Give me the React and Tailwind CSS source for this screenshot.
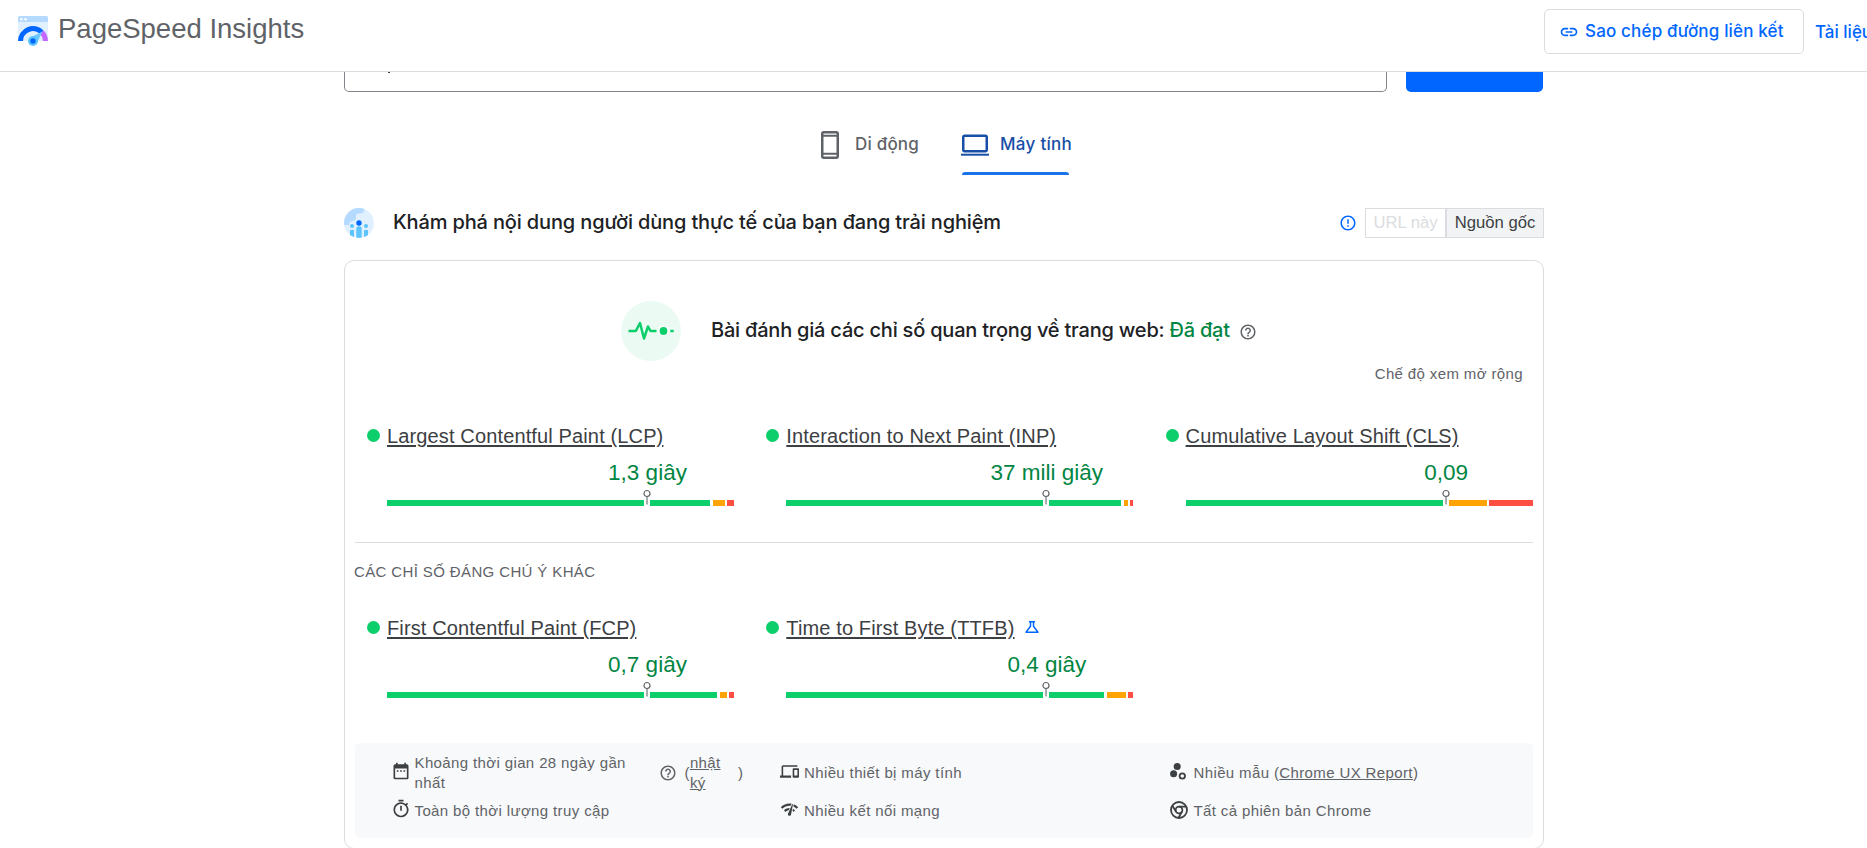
import React from "react";
import {
  MdDateRange,
  MdDevices,
  MdErrorOutline,
  MdHelpOutline,
  MdLink,
  MdNetworkCheck,
  MdOutlineScience,
  MdOutlineTimer,
} from "react-icons/md";

const coreMetrics = [
  { name: "Largest Contentful Paint (LCP)", value: "1,3 giây", good: 323, medium: 12 },
  { name: "Interaction to Next Paint (INP)", value: "37 mili giây", good: 335, medium: 4 },
  { name: "Cumulative Layout Shift (CLS)", value: "0,09", good: 260, medium: 38 },
];

const otherMetrics = [
  { name: "First Contentful Paint (FCP)", value: "0,7 giây", good: 330, medium: 7 },
  { name: "Time to First Byte (TTFB)", value: "0,4 giây", good: 318, medium: 19, experimental: true },
];

// Icons
const Logo = () => (
  <svg className="w-[30px] h-[30px] shrink-0" viewBox="0 0 30 30">
    <path d="M2 0h26a2 2 0 0 1 2 2v23H0V2a2 2 0 0 1 2-2z" fill="#e1f0ff" />
    <path d="M2 0h26a2 2 0 0 1 2 2v4H0V2a2 2 0 0 1 2-2z" fill="#b5daff" />
    <circle cx="3.3" cy="3.2" r="1.3" fill="#fff" />
    <circle cx="7.6" cy="3.2" r="1.3" fill="#fff" />
    <path d="M0 25a15 15 0 0 1 25.6-10.6L22 18a10 10 0 0 0-17 7z" fill="#0066ff" />
    <path d="M25.6 14.4A15 15 0 0 1 30 25h-5a10 10 0 0 0-3-7z" fill="#c469ff" />
    <path d="M24.5 15.5L11 22l7.500 6z" fill="#6fc8ff" />
    <circle cx="15" cy="25" r="5" fill="#5cc5ff" />
    <circle cx="15" cy="25" r="2.700" fill="#0066ff" />
  </svg>
);

const PhoneIcon = () => (
  <svg className="w-[18px] h-[28px]" viewBox="0 0 18 28" fill="none" stroke="currentColor">
    <rect x="1.250" y="1.250" width="15.500" height="25.500" rx="1.500" strokeWidth="2.500" />
    <path d="M1 4.800h16M1 22.800h16" strokeWidth="2" />
  </svg>
);

const LaptopIcon = () => (
  <svg className="w-[28px] h-[22px]" viewBox="0 0 28 22" fill="none" stroke="currentColor">
    <rect x="2.250" y="1.750" width="23.500" height="15.500" rx="1.500" strokeWidth="2.500" />
    <path d="M0 20.700h28" strokeWidth="2" />
  </svg>
);

const UsersIcon = () => (
  <svg className="w-[30px] h-[30px] shrink-0" viewBox="0 0 30 30">
    <clipPath id="users-clip">
      <circle cx="15" cy="15" r="15" />
    </clipPath>
    <g clipPath="url(#users-clip)">
      <rect width="30" height="30" fill="#e1f0ff" />
      <path d="M0 0h19.500c1.500 2.500 0 5.500-3 5.500h-2c-2 0-2.500 1-2.500 3v2c0 2-2 2-4 2.500s-3 1.500-3 4H0z" fill="#b5daff" />
      <g fill="#5cc5ff">
        <path d="M6 22h4v8H6zM12.300 21a2.700 2.700 0 0 1 5.400 0v9h-5.400zM20 22h4v8h-4z" />
        <circle cx="8" cy="18" r="2" />
        <circle cx="22" cy="18" r="2" />
      </g>
      <circle cx="15" cy="15" r="2.700" fill="#0066ff" />
    </g>
  </svg>
);

const PulseIcon = () => (
  <svg className="w-[60px] h-[60px] shrink-0" viewBox="0 0 60 60">
    <circle cx="30" cy="30" r="30" fill="#ebfbf3" />
    <path
      d="M7.500 30h7.300l4.200-8 4 15.500 4-12 2.500 4.500h6"
      fill="none"
      stroke="#0cce6a"
      strokeWidth="2.500"
      strokeLinejoin="round"
    />
    <circle cx="42.500" cy="30" r="5.500" fill="#fff" />
    <circle cx="42.500" cy="30" r="3.900" fill="#0cce6a" />
    <path d="M49.300 30h3.400" stroke="#0cce6a" strokeWidth="2.500" />
  </svg>
);

const SamplesIcon = () => (
  <svg className="w-[17px] h-[17px] -mt-[3px]" viewBox="0 0 17 17" fill="currentColor">
    <circle cx="7.200" cy="3.600" r="3.500" />
    <circle cx="3.600" cy="10.800" r="3.500" />
    <circle cx="12.300" cy="13" r="2.700" fill="none" stroke="currentColor" strokeWidth="1.800" />
  </svg>
);

const ChromeIcon = () => (
  <svg className="w-[18px] h-[18px] -mt-[3px]" viewBox="0 0 18 18" fill="none" stroke="currentColor" strokeWidth="1.800">
    <circle cx="9" cy="9" r="8" />
    <circle cx="9" cy="9" r="3.400" />
    <path d="M9 5.600h7.400M6.100 10.700L2.200 4.400M11.900 10.700L8.400 17" />
  </svg>
);

// Distribution bar with the 75th percentile pin
const Metric = ({ name, value, good, medium, experimental }) => (
  <div className="w-[347px]">
    <div className="flex items-center h-[26px] -ml-5">
      <span className="w-[13px] h-[13px] mr-[7px] -mt-[2px] rounded-full bg-[#0cce6b]" />
      <a className="text-[20px] leading-[26px] tracking-[0.135px] text-[#3c4043] underline decoration-2 underline-offset-2">
        {name}
      </a>
      {experimental && <MdOutlineScience className="ml-2 -mt-[2px] w-[18px] h-[18px] text-[#0066ff]" />}
    </div>
    <div className="w-[521px] h-[28px] mt-[10px] text-center text-[22.5px] leading-[28px] text-[#018642]">{value}</div>
    <div className="relative flex h-[6px] mt-[13px]">
      <div className="bg-[#0cce6b]" style={{ width: good }} />
      <div className="ml-[3px] bg-[#ffa400]" style={{ width: medium }} />
      <div className="ml-[2px] flex-1 bg-[#ff4e42]" />
      <span className="absolute left-[257px] top-0 w-[6px] h-[6px] bg-white" />
      <svg className="absolute left-[256px] -top-[11px] w-[8px] h-[16px]" viewBox="0 0 8 16" fill="none">
        <path d="M4 7.500V15.500" stroke="#8b8f93" strokeWidth="1.500" />
        <circle cx="4" cy="4.500" r="3" fill="#fff" stroke="#5f6368" strokeWidth="1.200" />
      </svg>
    </div>
  </div>
);

const Detail = ({ icon, children }) => (
  <div className="flex items-center shrink-0 w-[389.5px]">
    <span className="flex w-[24px] text-[#3c4043]">{icon}</span>
    {children}
  </div>
);

const App = () => {
  return (
    <div className="w-full h-[848px] overflow-hidden bg-white font-['Liberation_Sans',Arial,sans-serif] text-[#5f6368]">
      {/* Header */}
      <header className="flex justify-between h-[72px] border-b border-[#dadce0] overflow-hidden">
        <div className="flex pl-[18px] pt-[16px]">
          <Logo />
          <h1 className="ml-[10px] -mt-[3px] text-[27.5px] leading-[32px]">PageSpeed Insights</h1>
        </div>
        <div className="flex w-[323px] pt-[9px] font-['Inter',sans-serif] font-medium text-[#0066ff] whitespace-nowrap">
          <button className="flex items-center shrink-0 w-[260px] h-[45px] pl-[14px] border border-[#dadce0] rounded-[5px]">
            <MdLink className="w-[20px] h-[20px] mr-[6px]" />
            <span className="text-[17px] tracking-[0.17px]">Sao chép đường liên kết</span>
          </button>
          <a className="ml-[11px] mt-px text-[17px] leading-[45px]">Tài liệu</a>
        </div>
      </header>

      <main className="w-[1200px] ml-[344px]">
        {/* Search row */}
        <div className="flex h-[20px]">
          <div className="w-[1043px] border border-t-0 border-[#80868b] rounded-b-[5px]">
            <div className="w-[2px] h-px ml-[43px] bg-[#3c4043]" />
          </div>
          <div className="w-[137px] ml-[19px] bg-[#0066ff] rounded-b-[5px]" />
        </div>

        {/* Tabs */}
        <div className="flex h-[83px] pl-[477px] font-['Inter',sans-serif] font-medium text-[17px]">
          <div className="flex items-center h-[56px] mt-[25px]">
            <PhoneIcon />
            <span className="ml-[16px] w-[89px] tracking-[0.2px]">Di động</span>
          </div>
          <div className="flex flex-col mt-[25px] ml-[17px] text-[#174ea6]">
            <div className="flex items-center h-[56px]">
              <LaptopIcon />
              <span className="ml-[11px] tracking-[0.3px]">Máy tính</span>
            </div>
            <div className="w-[107px] h-[3px] ml-px -mt-px rounded-t-[3px] bg-[#1a73e8]" />
          </div>
        </div>

        {/* Field data heading */}
        <div className="flex items-center h-[30px] mt-[33px]">
          <UsersIcon />
          <h2 className="ml-[19px] -mt-[2px] flex-1 font-['Inter',sans-serif] font-medium text-[20px] tracking-[-0.15px] text-[#202124] whitespace-nowrap">
            Khám phá nội dung người dùng thực tế của bạn đang trải nghiệm
          </h2>
          <MdErrorOutline className="w-[18px] h-[18px] mr-[8px] text-[#0066ff]" />
          <button className="w-[81px] h-[30px] pb-[2px] border border-[#dadce0] text-[16.67px] text-[#dadce0]">URL này</button>
          <button className="w-[98px] h-[30px] pb-[2px] border border-[#dadce0] bg-[#f1f3f4] text-[16.67px] text-[#3c4043]">
            Nguồn gốc
          </button>
        </div>

        <section className="h-[589px] mt-[22px] px-[10px] border border-[#dadce0] rounded-[10px]">
          {/* Assessment */}
          <div className="flex items-center h-[60px] mt-[40px] ml-[266px] font-['Inter',sans-serif] font-medium text-[20px] tracking-[-0.21px] text-[#202124] whitespace-nowrap">
            <PulseIcon />
            <span className="ml-[30px] -mt-[2px]">Bài đánh giá các chỉ số quan trọng về trang web:</span>
            <span className="ml-[5px] -mt-[2px] text-[#018642]">Đã đạt</span>
            <MdHelpOutline className="ml-[9px] mt-[2px] w-[18px] h-[18px] text-[#5f6368]" />
          </div>
          <div className="mt-[3px] pr-[10px] text-right text-[15px] leading-[20px] tracking-[0.375px]">
            Chế độ xem mở rộng
          </div>

          <div className="flex gap-[52.3px] mt-[39px] pl-[32px]">
            {coreMetrics.map((metric) => (
              <Metric key={metric.name} {...metric} />
            ))}
          </div>

          <div className="mt-[36px] h-px bg-[#dadce0]" />
          <h3 className="mt-[19px] -ml-px text-[15px] leading-[20px] tracking-[0.375px]">CÁC CHỈ SỐ ĐÁNG CHÚ Ý KHÁC</h3>

          <div className="flex gap-[52.3px] mt-[33px] pl-[32px]">
            {otherMetrics.map((metric) => (
              <Metric key={metric.name} {...metric} />
            ))}
          </div>

          {/* Collection details */}
          <div className="h-[95px] mt-[45px] pl-[35.500px] rounded-[5px] bg-[#f8f9fa] text-[15px] leading-[20px] tracking-[0.375px]">
            <div className="flex h-[56px] pt-[3px]">
              <Detail icon={<MdDateRange className="w-[20px] h-[20px] -mt-[3px]" />}>
                <span className="w-[244px] pr-5">Khoảng thời gian 28 ngày gần nhất</span>
                <MdHelpOutline className="w-[18px] h-[18px] mr-[8px]" />
                <span>(</span>
                <a className="w-[48px] pr-2 underline">nhật ký</a>
                <span>)</span>
              </Detail>
              <Detail icon={<MdDevices className="w-[19px] h-[19px] -mt-[3px]" />}>Nhiều thiết bị máy tính</Detail>
              <Detail icon={<SamplesIcon />}>
                <span>
                  Nhiều mẫu (<a className="underline">Chrome UX Report</a>)
                </span>
              </Detail>
            </div>
            <div className="flex h-[24px]">
              <Detail icon={<MdOutlineTimer className="w-[20px] h-[20px] -mt-[4px]" />}>Toàn bộ thời lượng truy cập</Detail>
              <Detail icon={<MdNetworkCheck className="w-[19px] h-[19px] -mt-[4px]" />}>Nhiều kết nối mạng</Detail>
              <Detail icon={<ChromeIcon />}>Tất cả phiên bản Chrome</Detail>
            </div>
          </div>
        </section>
      </main>
    </div>
  );
};

export default App;
